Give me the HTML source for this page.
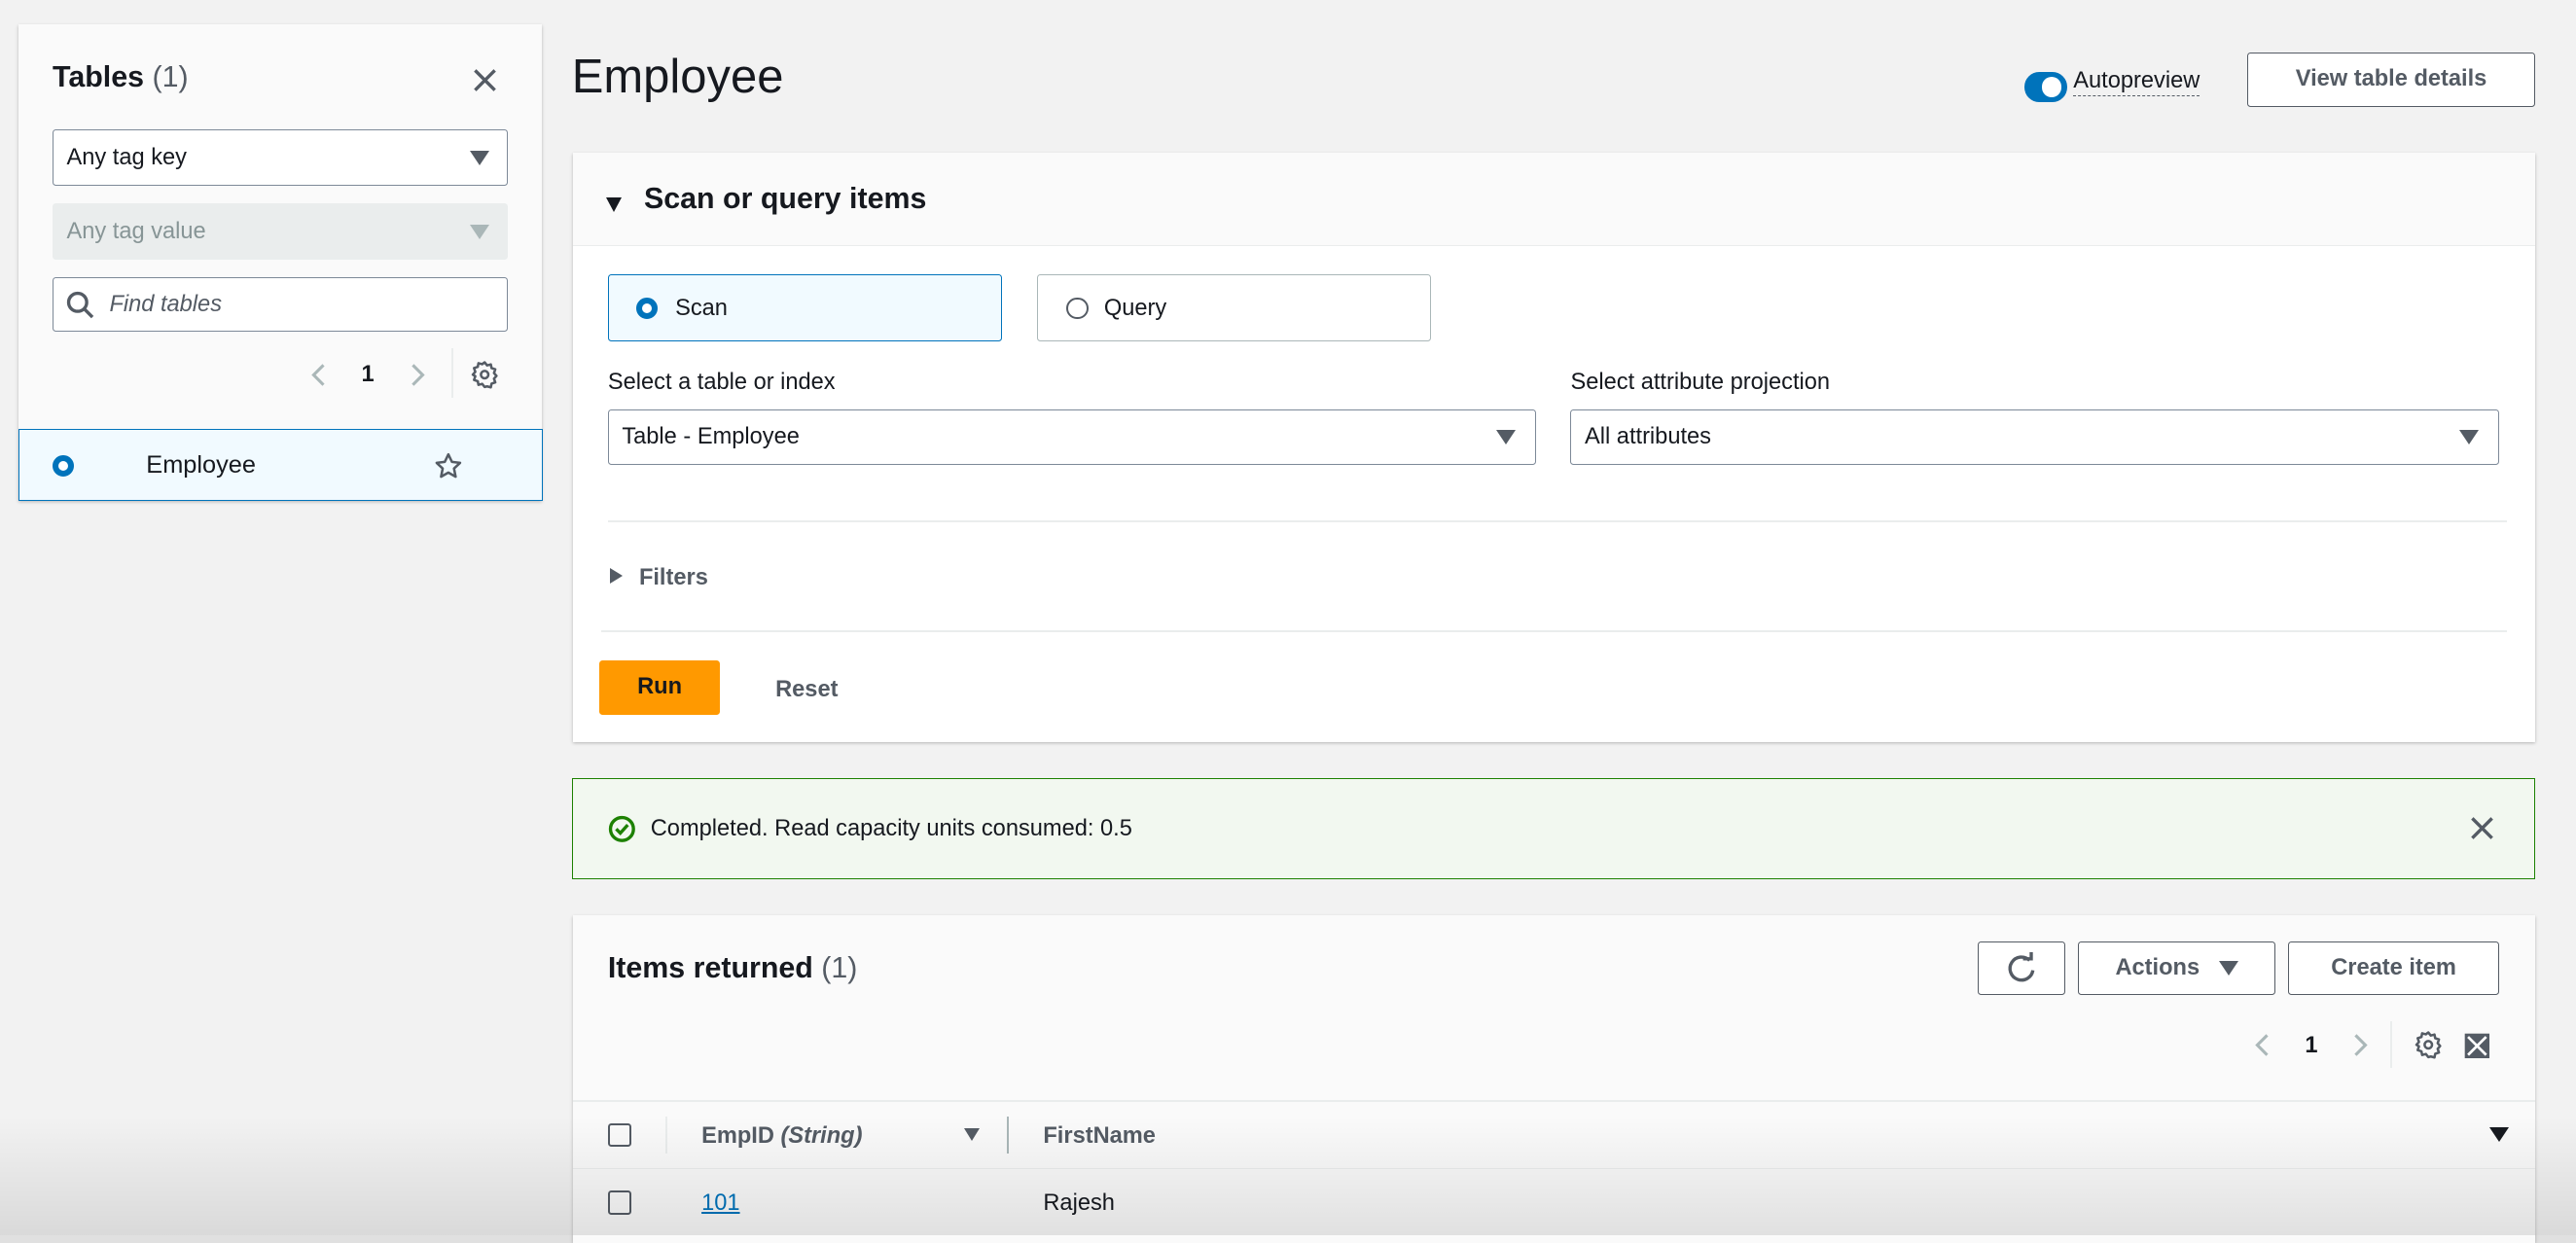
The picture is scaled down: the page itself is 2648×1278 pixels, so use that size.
<!DOCTYPE html>
<html style="background:#e0e0e0"><head><meta charset="utf-8"><style>
html,body{margin:0;padding:0}
body{width:1568px;height:752px;overflow:hidden;zoom:1.6888;background:#f2f2f2;font-family:"Liberation Sans",sans-serif;color:#16191f;position:relative}
.a{position:absolute}
.box{position:absolute;background:#fafafa;box-shadow:0 1px 2px rgba(0,0,0,.25)}
.inp{position:absolute;border:1px solid #7d8998;border-radius:2px;background:#fff;font-size:14px;box-sizing:border-box;padding-left:8px;display:flex;align-items:center}
.tri{position:absolute;width:0;height:0;border-left:6px solid transparent;border-right:6px solid transparent;border-top:9px solid #545b64}
.btn{position:absolute;border:1px solid #545b64;border-radius:2px;background:#fff;box-sizing:border-box;font-size:14px;font-weight:bold;color:#545b64;display:flex;align-items:center;justify-content:center}
.hr{position:absolute;height:1px;background:#eaeded}
</style></head><body>
<div class="box" style="left:11px;top:15px;width:319px;height:290px"></div>
<div class="a" style="left:32px;top:37px;font-size:18px;font-weight:bold">Tables <span style="font-weight:normal;color:#545b64">(1)</span></div>
<svg class="a" style="left:287px;top:41px" width="16" height="16"><path d="M2 2L14 14M14 2L2 14" stroke="#545b64" stroke-width="2"/></svg>
<div class="inp" style="left:32px;top:79px;width:277px;height:34px">Any tag key</div>
<div class="tri" style="left:286px;top:92px"></div>
<div class="inp" style="left:32px;top:124px;width:277px;height:34px;background:#eaeded;border-color:#eaeded;color:#879596">Any tag value</div>
<div class="tri" style="left:286px;top:137px;border-top-color:#aab7b8"></div>
<div class="inp" style="left:32px;top:169px;width:277px;height:33px;padding-left:34px;font-style:italic;color:#545b64">Find tables</div>
<svg class="a" style="left:40px;top:177px" width="18" height="18"><circle cx="7" cy="7" r="5.5" fill="none" stroke="#545b64" stroke-width="2"/><path d="M11 11L16 16" stroke="#545b64" stroke-width="2"/></svg>
<svg class="a" style="left:189px;top:220px" width="10" height="16"><path d="M8 2L2 8L8 14" fill="none" stroke="#aab7b8" stroke-width="1.8"/></svg>
<div class="a" style="left:220px;top:220px;font-size:14px;font-weight:bold">1</div>
<svg class="a" style="left:249px;top:220px" width="10" height="16"><path d="M2 2L8 8L2 14" fill="none" stroke="#aab7b8" stroke-width="1.8"/></svg>
<div class="a" style="left:275px;top:212px;width:1px;height:30px;background:#eaeded"></div>
<svg class="a" style="left:286px;top:219px" width="18" height="18" viewBox="0 0 24 24"><path d="M12 2l2 2.5 3-.8.6 3 3 1-1 3 2 2.3-2 2.3 1 3-3 1-.6 3-3-.8L12 22l-2-2.5-3 .8-.6-3-3-1 1-3L2.4 12l2-2.3-1-3 3-1 .6-3 3 .8z" fill="none" stroke="#545b64" stroke-width="2" stroke-linejoin="round"/><circle cx="12" cy="12" r="3" fill="none" stroke="#545b64" stroke-width="2"/></svg>
<div class="a" style="left:11px;top:261px;width:318px;height:43px;background:#f1faff;border:1px solid #0073bb"></div>
<div class="a" style="left:32px;top:277px;border:4px solid #0073bb;border-radius:50%;background:#fff;width:6px;height:6px"></div>
<div class="a" style="left:89px;top:275px;font-size:15px">Employee</div>
<svg class="a" style="left:263px;top:275px" width="20" height="18" viewBox="0 0 24 24"><path d="M12 2.5l2.9 6.1 6.6.8-4.9 4.6 1.3 6.6L12 17.3l-5.9 3.3 1.3-6.6-4.9-4.6 6.6-.8z" fill="none" stroke="#545b64" stroke-width="2" stroke-linejoin="round"/></svg>

<div class="a" style="left:348px;top:30px;font-size:29px">Employee</div>
<div class="a" style="left:1232px;top:44px;width:26px;height:18px;border-radius:9px;background:#0073bb"></div>
<div class="a" style="left:1243px;top:47px;width:12px;height:12px;border-radius:50%;background:#fff"></div>
<div class="a" style="left:1262px;top:41px;font-size:14px;border-bottom:1px dashed #545b64;line-height:17px">Autopreview</div>
<div class="btn" style="left:1368px;top:32px;width:175px;height:33px">View table details</div>

<div class="box" style="left:349px;top:93px;width:1194px;height:359px;background:#fff"></div>
<div class="a" style="left:349px;top:93px;width:1194px;height:56px;background:#fafafa;border-bottom:1px solid #eaeded"></div>
<div class="tri" style="left:369px;top:120px;border-top-color:#16191f;border-left-width:5px;border-right-width:5px"></div>
<div class="a" style="left:392px;top:111px;font-size:18px;font-weight:bold">Scan or query items</div>
<div class="a" style="left:370px;top:167px;width:240px;height:41px;box-sizing:border-box;border:1px solid #0073bb;border-radius:2px;background:#f1faff"></div>
<div class="a" style="left:387px;top:181px;width:6px;height:6px;border:4px solid #0073bb;border-radius:50%;background:#fff"></div>
<div class="a" style="left:411px;top:180px;font-size:14px">Scan</div>
<div class="a" style="left:631px;top:167px;width:240px;height:41px;box-sizing:border-box;border:1px solid #aab7b8;border-radius:2px;background:#fff"></div>
<div class="a" style="left:649px;top:181px;width:11px;height:11px;border:1.5px solid #545b64;border-radius:50%"></div>
<div class="a" style="left:672px;top:180px;font-size:14px">Query</div>
<div class="a" style="left:370px;top:225px;font-size:14px">Select a table or index</div>
<div class="inp" style="left:370px;top:249px;width:565px;height:34px">Table - Employee</div>
<div class="tri" style="left:911px;top:262px"></div>
<div class="a" style="left:956px;top:225px;font-size:14px">Select attribute projection</div>
<div class="inp" style="left:956px;top:249px;width:565px;height:34px">All attributes</div>
<div class="tri" style="left:1497px;top:262px"></div>
<div class="hr" style="left:370px;top:317px;width:1156px"></div>
<div class="a" style="left:371px;top:346px;width:0;height:0;border-top:5px solid transparent;border-bottom:5px solid transparent;border-left:8px solid #545b64"></div>
<div class="a" style="left:389px;top:344px;font-size:14px;font-weight:bold;color:#545b64">Filters</div>
<div class="hr" style="left:366px;top:384px;width:1160px"></div>
<div class="a" style="left:365px;top:402px;width:73px;height:33px;background:#ff9900;border-radius:2px;font-size:14px;font-weight:bold;display:flex;align-items:center;justify-content:center">Run</div>
<div class="a" style="left:472px;top:412px;font-size:14px;font-weight:bold;color:#545b64">Reset</div>

<div class="a" style="left:348px;top:474px;width:1195px;height:61px;box-sizing:border-box;border:1px solid #1d8102;background:#f2f8f0"></div>
<svg class="a" style="left:370px;top:496px" width="17" height="17"><circle cx="8.5" cy="8.5" r="7" fill="none" stroke="#1d8102" stroke-width="2"/><path d="M5 8.5l2.5 2.5 4.5-5" fill="none" stroke="#1d8102" stroke-width="2"/></svg>
<div class="a" style="left:396px;top:497px;font-size:14px">Completed. Read capacity units consumed: 0.5</div>
<svg class="a" style="left:1503px;top:496px" width="16" height="16"><path d="M2 2L14 14M14 2L2 14" stroke="#545b64" stroke-width="2"/></svg>

<div class="box" style="left:349px;top:557px;width:1194px;height:200px"></div>
<div class="a" style="left:370px;top:579px;font-size:18px;font-weight:bold">Items returned <span style="font-weight:normal;color:#545b64">(1)</span></div>
<div class="btn" style="left:1204px;top:573px;width:53px;height:33px"><svg width="20" height="20" viewBox="0 0 20 20"><path d="M15 5A7 7 0 1 0 17 11" fill="none" stroke="#545b64" stroke-width="2"/><path d="M11 4h5V0" fill="none" stroke="#545b64" stroke-width="2"/></svg></div>
<div class="btn" style="left:1265px;top:573px;width:120px;height:33px">Actions&nbsp;&nbsp;&nbsp;<span style="display:inline-block;width:0;height:0;border-left:6px solid transparent;border-right:6px solid transparent;border-top:9px solid #545b64"></span></div>
<div class="btn" style="left:1393px;top:573px;width:128px;height:33px">Create item</div>
<svg class="a" style="left:1372px;top:628px" width="10" height="16"><path d="M8 2L2 8L8 14" fill="none" stroke="#aab7b8" stroke-width="1.8"/></svg>
<div class="a" style="left:1403px;top:629px;font-size:14px;font-weight:bold">1</div>
<svg class="a" style="left:1432px;top:628px" width="10" height="16"><path d="M2 2L8 8L2 14" fill="none" stroke="#aab7b8" stroke-width="1.8"/></svg>
<div class="a" style="left:1455px;top:622px;width:1px;height:28px;background:#eaeded"></div>
<svg class="a" style="left:1469px;top:627px" width="18" height="18" viewBox="0 0 24 24"><path d="M12 2l2 2.5 3-.8.6 3 3 1-1 3 2 2.3-2 2.3 1 3-3 1-.6 3-3-.8L12 22l-2-2.5-3 .8-.6-3-3-1 1-3L2.4 12l2-2.3-1-3 3-1 .6-3 3 .8z" fill="none" stroke="#545b64" stroke-width="2" stroke-linejoin="round"/><circle cx="12" cy="12" r="3" fill="none" stroke="#545b64" stroke-width="2"/></svg>
<svg class="a" style="left:1499px;top:628px" width="17" height="17" viewBox="0 0 17 17"><rect x="1" y="1" width="15" height="15" fill="#545b64"/><path d="M3 3L14 14M14 3L3 14" stroke="#fff" stroke-width="1.6"/></svg>
<div class="hr" style="left:349px;top:670px;width:1194px"></div>
<div class="a" style="left:370px;top:684px;width:12px;height:12px;border:1.5px solid #545b64;border-radius:2px"></div>
<div class="a" style="left:405px;top:680px;width:1px;height:22px;background:#eaeded"></div>
<div class="a" style="left:427px;top:684px;font-size:14px;font-weight:bold;color:#545b64">EmpID <i>(String)</i></div>
<div class="a" style="left:587px;top:687px;width:0;height:0;border-left:5px solid transparent;border-right:5px solid transparent;border-top:8px solid #545b64"></div>
<div class="a" style="left:613px;top:680px;width:1px;height:22px;background:#aab7b8"></div>
<div class="a" style="left:635px;top:684px;font-size:14px;font-weight:bold;color:#545b64">FirstName</div>
<div class="a" style="left:1515px;top:686px;width:0;height:0;border-left:6px solid transparent;border-right:6px solid transparent;border-top:9px solid #16191f"></div>
<div class="hr" style="left:349px;top:711px;width:1194px"></div>
<div class="a" style="left:370px;top:725px;width:12px;height:12px;border:1.5px solid #545b64;border-radius:2px"></div>
<div class="a" style="left:427px;top:725px;font-size:14px;color:#0073bb;text-decoration:underline">101</div>
<div class="a" style="left:635px;top:725px;font-size:14px">Rajesh</div>
<div class="a" style="left:0;top:680px;width:1568px;height:72px;background:linear-gradient(rgba(0,0,0,0),rgba(0,0,0,.1))"></div>
</body></html>
